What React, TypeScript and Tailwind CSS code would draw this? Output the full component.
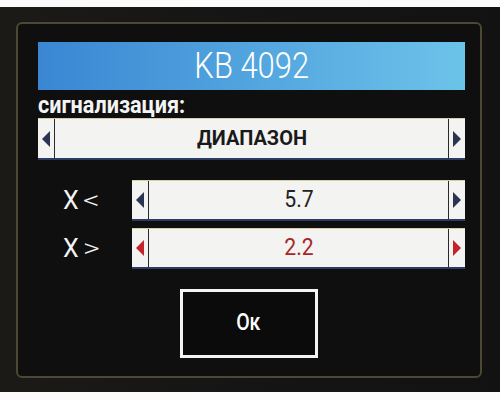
const font = {
  fontFamily: 'Roboto, "DejaVu Sans", sans-serif',
};

function Arrow({ dir, color }: { dir: "left" | "right"; color: string }) {
  return (
    <svg width="10" height="18" viewBox="0 0 10 18">
      {dir === "left" ? (
        <polygon points="9,1 9,17 1,9" fill={color} />
      ) : (
        <polygon points="1,1 1,17 9,9" fill={color} />
      )}
    </svg>
  );
}

function Spinner({
  value,
  textClass,
  arrowColor,
  height,
}: {
  value: string;
  textClass: string;
  arrowColor: string;
  height: string;
}) {
  return (
    <div
      className={`flex ${height} bg-[#f3f3f1] border-t border-t-[#d8cfa8] border-b-2 border-b-[#2c3a66]`}
    >
      <div className="flex w-[17px] items-center justify-center border-r border-r-[#2a2a2a]">
        <Arrow dir="left" color={arrowColor} />
      </div>
      <div className="flex flex-1 items-center justify-center">
        <span className={`inline-block ${textClass}`}>{value}</span>
      </div>
      <div className="flex w-[17px] items-center justify-center border-l border-l-[#2a2a2a]">
        <Arrow dir="right" color={arrowColor} />
      </div>
    </div>
  );
}

function Label({ sign }: { sign: string }) {
  return (
    <div className="flex w-[94px] items-center gap-[6px] pl-[25px] text-[25px] leading-none text-[#f2f2f2]">
      <span>X</span>
      <span className="inline-block scale-x-[1.3] font-light">{sign}</span>
    </div>
  );
}

export default function App() {
  return (
    <div className="flex h-[400px] w-[500px] flex-col bg-white" style={font}>
      <div className="h-[7px] bg-[#fbfbfb]" />
      <div className="flex h-[385px] flex-col bg-gradient-to-r from-[#1c1a17] via-[#151515] to-[#121212] pt-[15px]">
        <div className="ml-[16px] flex h-[356px] w-[466px] flex-col rounded-[6px] border-2 border-[#4d4834] bg-[#0f0f0f] pl-[20px] pr-[15px] pt-[18px]">
          <div className="flex h-[48px] items-center justify-center bg-gradient-to-r from-[#3a86d3] to-[#6cc3e9] text-white">
            <span className="inline-block scale-x-[0.86] text-[36px] font-light leading-none">
              KB 4092
            </span>
          </div>
          <div className="flex h-[28px] items-end">
            <span className="inline-block origin-left scale-x-[0.94] text-[23px] font-bold leading-[24px] text-[#f4f4f4]">
              сигнализация:
            </span>
          </div>
          <Spinner
            value="ДИАПАЗОН"
            textClass="scale-x-[0.95] text-[21px] font-bold text-[#1a1a1a]"
            arrowColor="#2b3450"
            height="h-[42px]"
          />
          <div className="mt-[20px] flex flex-col gap-[7px]">
            <div className="flex items-center">
              <Label sign="<" />
              <div className="flex-1">
                <Spinner
                  value="5.7"
                  textClass="scale-x-[0.92] text-[23px] text-[#222222]"
                  arrowColor="#2b3450"
                  height="h-[41px]"
                />
              </div>
            </div>
            <div className="flex items-center">
              <Label sign=">" />
              <div className="flex-1">
                <Spinner
                  value="2.2"
                  textClass="scale-x-[0.92] text-[23px] text-[#a8262a]"
                  arrowColor="#c3242b"
                  height="h-[41px]"
                />
              </div>
            </div>
          </div>
          <div className="mt-[20px] flex justify-center">
            <div className="ml-[-6px] flex h-[69px] w-[138px] items-center justify-center border-[3px] border-[#f4f4f4] bg-[#0b0b0b] text-white">
              <span className="inline-block scale-x-[0.85] text-[23px] font-medium">Ок</span>
            </div>
          </div>
        </div>
      </div>
      <div className="h-[8px] bg-[#fbfbfb]" />
    </div>
  );
}
